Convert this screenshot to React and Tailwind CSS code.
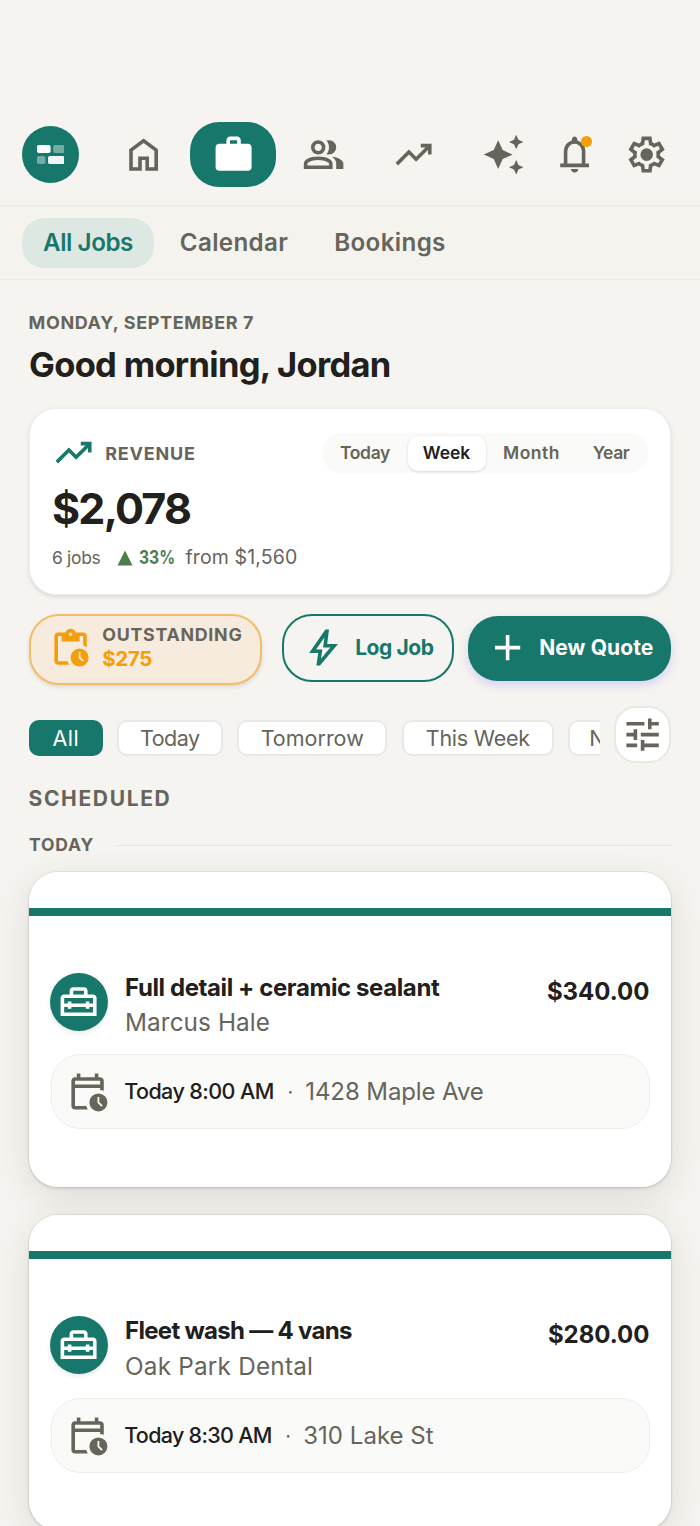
import React, { useState } from 'react';
import clsx from 'clsx';

const ICONS = {
  home: 'M240-200h120v-240h240v240h120v-360L480-740 240-560v360Zm-80 80v-480l320-240 320 240v480H520v-240h-80v240H160Z',
  work: 'M160-120q-33 0-56.5-23.5T80-200v-440q0-33 23.5-56.5T160-720h160v-80q0-33 23.5-56.5T400-880h160q33 0 56.5 23.5T640-800v80h160q33 0 56.5 23.5T880-640v440q0 33-23.5 56.5T800-120H160Zm240-600h160v-80H400v80Z',
  group: 'M40-160v-112q0-34 17.5-62.5T104-378q62-31 126-46.5T360-440q66 0 130 15.5T616-378q29 15 46.5 43.5T680-272v112H40Zm720 0v-120q0-44-24.5-84.5T666-434q51 6 96 20.5t84 35.5q36 20 55 44.5t19 53.5v120H760ZM360-480q-66 0-113-47t-47-113q0-66 47-113t113-47q66 0 113 47t47 113q0 66-47 113t-113 47Zm400-160q0 66-47 113t-113 47q-11 0-28-2.5t-28-5.5q27-32 41.5-71t14.5-81q0-42-14.5-81T544-792q14-5 28-6.5t28-1.5q66 0 113 47t47 113ZM120-240h480v-32q0-11-5.5-20T580-306q-54-27-109-40.5T360-360q-56 0-111 13.5T140-306q-9 5-14.5 14t-5.5 20v32Zm240-320q33 0 56.5-23.5T440-640q0-33-23.5-56.5T360-720q-33 0-56.5 23.5T280-640q0 33 23.5 56.5T360-560Z',
  trend: 'm136-240-56-56 296-298 160 160 208-206H640v-80h240v240h-80v-104L536-320 376-480 136-240Z',
  sparkle: 'm760-600-50-110-110-50 110-50 50-110 50 110 110 50-110 50-50 110Zm0 560-50-110-110-50 110-50 50-110 50 110 110 50-110 50-50 110ZM360-160 260-380 40-480l220-100 100-220 100 220 220 100-220 100-100 220Z',
  bell: 'M160-200v-80h80v-280q0-83 50-147.5T420-792v-28q0-25 17.5-42.5T480-880q25 0 42.5 17.5T540-820v28q80 20 130 84.5T720-560v280h80v80H160ZM480-80q-33 0-56.5-23.5T400-160h160q0 33-23.5 56.5T480-80ZM320-280h320v-280q0-66-47-113t-113-47q-66 0-113 47t-47 113v280Z',
  gear: 'm370-80-16-128q-13-5-24.5-12T307-235l-119 50L78-375l103-78q-1-7-1-13.5v-27q0-6.5 1-13.5L78-585l110-190 119 50q11-8 23-15t24-12l16-128h220l16 128q13 5 24.5 12t22.5 15l119-50 110 190-103 78q1 7 1 13.5v27q0 6.5-2 13.5l103 78-110 190-118-50q-11 8-23 15t-24 12L590-80H370Zm70-80h79l14-106q31-8 57.5-23.5T639-327l99 41 39-68-86-65q5-14 7-29.5t2-31.5q0-16-2-31.5t-7-29.5l86-65-39-68-99 42q-22-23-48.5-38.5T533-694l-13-106h-79l-14 106q-31 8-57.5 23.5T321-633l-99-41-39 68 86 64q-5 15-7 30t-2 32q0 16 2 31t7 30l-86 65 39 68 99-42q22 23 48.5 38.5T427-266l13 106Zm42-180q58 0 99-41t41-99q0-58-41-99t-99-41q-59 0-99.5 41T342-480q0 58 40.5 99t99.5 41Z',
  pending: 'M680-80q-83 0-141.5-58.5T480-280q0-83 58.5-141.5T680-480q83 0 141.5 58.5T880-280q0 83-58.5 141.5T680-80Zm67-105 28-28-75-75v-112h-40v128l87 87Zm-547 65q-33 0-56.5-23.5T120-200v-560q0-33 23.5-56.5T200-840h167q11-35 43-57.5t70-22.5q40 0 71.5 22.5T594-840h166q33 0 56.5 23.5T840-760v250q-18-13-38-22t-42-16v-212h-80v120H280v-120h-80v560h212q7 22 16 42t22 38H200Zm280-640q17 0 28.5-11.5T520-800q0-17-11.5-28.5T480-840q-17 0-28.5 11.5T440-800q0 17 11.5 28.5T480-760Z',
  bolt: 'm422-232 207-248H469l29-227-185 267h139l-30 208ZM320-80l40-280H160l360-520h80l-40 320h240L400-80h-80Z',
  add: 'M440-440H200v-80h240v-240h80v240h240v80H520v240h-80v-240Z',
  tune: 'M440-120v-240h80v80h320v80H520v80h-80Zm-320-80v-80h240v80H120Zm160-160v-80H120v-80h160v-80h80v240h-80Zm160-80v-80h400v80H440Zm160-160v-240h80v80h160v80H680v80h-80Zm-480-80v-80h400v80H120Z',
  calendar: 'M200-640h560v-80H200v80Zm0 560q-33 0-56.5-23.5T120-160v-560q0-33 23.5-56.5T200-800h40v-80h80v80h320v-80h80v80h40q33 0 56.5 23.5T840-720v227q-19-9-39-15t-41-9v-43H200v400h252q7 22 16.5 42T491-80H200Zm520 40q-83 0-141.5-58.5T520-240q0-83 58.5-141.5T720-440q83 0 141.5 58.5T920-240q0 83-58.5 141.5T720-40Zm67-105 28-28-75-75v-112h-40v128l87 87Z',
  toolbox: 'M80-160v-400q0-33 23.5-56.5T160-640h120v-80q0-33 23.5-56.5T360-800h240q33 0 56.5 23.5T680-720v80h120q33 0 56.5 23.5T880-560v400H80Zm240-160v-40h320v40h80v-40h80v120H160v-120h80v40h80ZM160-440v-120h640v120h-80v-40h-80v40H320v-40h-80v40h-80Zm200-200h240v-80H360v80Z',
};

function Icon({ name, className }) {
  return (
    <svg viewBox="0 -960 960 960" fill="currentColor" fillRule="evenodd" className={clsx('size-[43.2px] shrink-0', className)}>
      <path d={ICONS[name]} />
    </svg>
  );
}

const NAV = ['home', 'work', 'group', 'trend'];

const TABS = [
  { label: 'All Jobs', className: 'w-[132px] tracking-[-0.46px]' },
  { label: 'Calendar', className: 'w-[160px] tracking-[0.34px]' },
  { label: 'Bookings', className: 'w-[152px] tracking-[0.35px]' },
];

const PERIODS = [
  { label: 'Today', className: 'w-[82px] tracking-[-0.38px]' },
  { label: 'Week', className: 'w-[78px] tracking-[-0.06px]' },
  { label: 'Month', className: 'w-[89px] tracking-[0.5px]' },
  { label: 'Year', className: 'w-[70px] tracking-[-0.44px]' },
];

const FILTERS = [
  { label: 'All', className: 'w-[73.5px] tracking-[0.48px]' },
  { label: 'Today', className: 'w-[105.5px] tracking-[-0.5px]' },
  { label: 'Tomorrow', className: 'w-[150px]' },
  { label: 'This Week', className: 'w-[152px] tracking-[-0.23px]' },
  { label: 'Next Week', className: 'w-[152px]' },
];

const JOBS = [
  {
    title: 'Full detail + ceramic sealant',
    titleClass: 'tracking-[-0.4px]',
    client: 'Marcus Hale',
    clientClass: 'tracking-[0.1px]',
    price: '$340.00',
    time: 'Today 8:00 AM',
    timeClass: 'tracking-[-0.57px]',
    address: '1428 Maple Ave',
    addressClass: 'tracking-[-0.1px]',
  },
  {
    title: 'Fleet wash — 4 vans',
    titleClass: 'tracking-[-0.7px]',
    client: 'Oak Park Dental',
    clientClass: 'tracking-[0.22px] pt-px',
    price: '$280.00',
    time: 'Today 8:30 AM',
    timeClass: 'tracking-[-0.7px]',
    address: '310 Lake St',
    addressClass: 'tracking-[0.03px]',
  },
];

function Logo() {
  return (
    <div className="flex size-[57px] shrink-0 items-center justify-center rounded-full bg-[#17776a]">
      <svg viewBox="0 0 27.4 19" className="h-[19px] w-[27.4px]" fill="#fff">
        <rect x="0" y="0" width="13.6" height="8" rx="1.8" />
        <rect x="16.2" y="0" width="11.2" height="8" rx="1.8" opacity="0.4" />
        <rect x="0" y="11" width="8.4" height="8" rx="1.8" opacity="0.4" />
        <rect x="11" y="11" width="16.4" height="8" rx="1.8" opacity="0.93" />
      </svg>
    </div>
  );
}

function Header() {
  return (
    <header className="flex h-[206px] items-start border-b border-[#eeece8] pt-[122px] pl-[21.8px]">
      <div className="flex h-[65px] items-center">
        <Logo />
        <nav className="ml-[21.5px] flex gap-1">
          {NAV.map(n => (
            <button
              key={n}
              className={clsx(
                'flex h-[65px] w-[86px] items-center justify-center rounded-[29px]',
                n === 'work' ? 'bg-[#17776a] text-white' : 'text-[#66645b]',
              )}
            >
              <Icon name={n} />
            </button>
          ))}
        </nav>
        <div className="ml-[18.2px] flex gap-3.5 text-[#66645b]">
          <button className="flex w-[57.5px] justify-center"><Icon name="sparkle" /></button>
          <button className="relative flex w-[57.5px] justify-center">
            <Icon name="bell" />
            <span className="absolute top-[3.5px] right-[11px] size-[11px] rounded-full bg-[#f59e0b]" />
          </button>
          <button className="flex w-[57.5px] justify-center"><Icon name="gear" /></button>
        </div>
      </div>
    </header>
  );
}

function Tabs() {
  return (
    <div className="flex h-[74px] items-center border-b border-[#eeece8] bg-[#f4f3ee] pl-[22px] text-[24.2px] font-semibold">
      {TABS.map((t, i) => (
        <button
          key={t.label}
          className={clsx(
            'h-[50px] rounded-[22px] pt-[2px] whitespace-nowrap',
            i === 0 ? 'bg-[#dee8e2] text-[#17776a]' : 'text-[#66645b]',
            t.className,
          )}
        >
          {t.label}
        </button>
      ))}
    </div>
  );
}

function Revenue() {
  const [period, setPeriod] = useState('Week');
  return (
    <section className="mt-[21px] h-[187px] rounded-[27px] border border-[#efeeea] bg-white px-[22px] pt-[24px] shadow-[0_2px_4px_rgba(60,55,45,0.14)]">
      <div className="flex h-10 items-center">
        <Icon name="trend" className="text-[#17776a]" />
        <span className="ml-[10px] text-[18px] font-bold tracking-[0.8px] text-[#66645b]">REVENUE</span>
        <div className="ml-auto flex h-10 w-[326px] items-center rounded-[20px] bg-[#fafaf8] pl-[2px] text-[17.5px] font-semibold">
          {PERIODS.map(p => (
            <button
              key={p.label}
              onClick={() => setPeriod(p.label)}
              className={clsx(
                'h-[35px] rounded-[10px]',
                p.label === period ? 'mx-[1.5px] bg-white text-[#21201d] shadow-[0_1px_3px_rgba(0,0,0,0.14)]' : 'text-[#66645b]',
                p.className,
              )}
            >
              {p.label}
            </button>
          ))}
        </div>
      </div>
      <div className="mt-[8px] h-[54px] text-[43px] leading-[54px] font-bold tracking-[-1.8px] text-[#21201d]">$2,078</div>
      <div className="mt-[11px] flex h-6 items-center whitespace-nowrap text-[#66645b]">
        <span className="text-[17.5px] tracking-[-0.34px]">6 jobs</span>
        <svg viewBox="0 0 16 16" className="ml-[17px] size-4" fill="#4e7d4d">
          <path d="M8 0.5 15.5 15.5H0.5Z" />
        </svg>
        <span className="-mr-[7px] ml-[6px] origin-left scale-x-[0.86] text-[18.2px] font-bold text-[#4e7d4d]">33%</span>
        <span className="ml-[11px] text-[19.5px] tracking-[0.15px]">from $1,560</span>
      </div>
    </section>
  );
}

function Actions() {
  return (
    <div className="mt-[19px] flex h-[71px] items-start">
      <button className="flex h-[70.5px] w-[233px] items-center rounded-[30px] border-2 border-[#f2bd6a] bg-[#f6ebdc] pl-[18px] text-left shadow-[0_2px_4px_rgba(60,55,45,0.14)]">
        <Icon name="pending" className="-mt-px text-[#f59e0b]" />
        <span className="-mt-[4px] ml-[10px] flex flex-col">
          <span className="text-[17.8px] leading-6 font-bold tracking-[0.75px] text-[#66645b]">OUTSTANDING</span>
          <span className="text-[20.5px] leading-6 font-bold tracking-[-0.35px] text-[#f59e0b]">$275</span>
        </span>
      </button>
      <button className="ml-[20px] flex h-[68px] w-[172px] items-center rounded-[30px] border-2 border-[#17776a] pl-[18px] text-[21px] font-bold tracking-[-0.44px] text-[#17776a]">
        <Icon name="bolt" />
        <span className="ml-[10px]">Log Job</span>
      </button>
      <button className="mt-[1.5px] ml-[14px] flex h-[65px] w-[203px] items-center rounded-[30px] bg-[#17776a] pl-[17.5px] text-[21px] font-bold tracking-[0.1px] text-white shadow-[0_4px_10px_rgba(99,91,255,0.22)]">
        <Icon name="add" />
        <span className="ml-[10.5px] whitespace-nowrap">New Quote</span>
      </button>
    </div>
  );
}

function Filters() {
  const [filter, setFilter] = useState('All');
  return (
    <div className="mt-[21px] flex h-[57px] items-center">
      <div className="mt-[6px] flex w-[571px] gap-[14.6px] overflow-hidden text-[21.5px]">
        {FILTERS.map(f => (
          <button
            key={f.label}
            onClick={() => setFilter(f.label)}
            className={clsx(
              'h-9 shrink-0 rounded-[10px] border-2 leading-8 whitespace-nowrap',
              f.label === filter ? 'border-[#17776a] bg-[#17776a] text-white' : 'border-[#e9e8e4] bg-white text-[#66645b]',
              f.className,
            )}
          >
            {f.label}
          </button>
        ))}
      </div>
      <button className="ml-[14px] flex size-[57px] items-center justify-center rounded-[22px] border-2 border-[#e9e8e4] bg-white text-[#66645b]">
        <Icon name="tune" />
      </button>
    </div>
  );
}

function JobCard({ job }) {
  return (
    <article className="h-[315px] overflow-hidden rounded-[29px] bg-white">
      <div className="mt-9 h-[7.5px] bg-[#17776a]" />
      <div className="flex px-[21.5px] pt-[57.5px]">
        <div className="-ml-[0.5px] flex size-[57.5px] shrink-0 items-center justify-center rounded-full bg-[#17776a] text-white shadow-[0_2px_4px_rgba(60,55,45,0.12)]">
          <Icon name="toolbox" />
        </div>
        <div className="ml-[17.5px] whitespace-nowrap">
          <div className={clsx('text-[24px] leading-[30px] font-bold text-[#21201d]', job.titleClass)}>{job.title}</div>
          <div className={clsx('mt-[2px] text-[24.3px] leading-[34px] text-[#66645b]', job.clientClass)}>{job.client}</div>
        </div>
        <div className="mt-[4px] ml-auto text-[24px] leading-[30px] font-bold text-[#21201d]">{job.price}</div>
      </div>
      <div className="mx-[21.5px] mt-[15px] flex h-[75px] items-center rounded-[29px] border-[1.5px] border-[#eeedea] bg-[#fafaf8] pl-[14.5px] whitespace-nowrap">
        <Icon name="calendar" className="text-[#66645b]" />
        <span className={clsx('ml-[15px] text-[21.5px] font-medium text-[#21201d]', job.timeClass)}>{job.time}</span>
        <span className="ml-[13.5px] w-[6px] text-center text-[20px] text-[#66645b]">·</span>
        <span className={clsx('ml-[12px] text-[24px] text-[#66645b]', job.addressClass)}>{job.address}</span>
      </div>
    </article>
  );
}

export default function App() {
  return (
    <div className="h-[1526px] w-[700px] overflow-hidden bg-[#f5f4f0] font-['Inter',sans-serif]">
      <Header />
      <Tabs />
      <main className="px-[29px] pt-[30.5px]">
        <div className="-ml-[0.5px] text-[18px] leading-6 font-bold tracking-[0.62px] text-[#66645b]">MONDAY, SEPTEMBER 7</div>
        <h1 className="mt-[8.5px] text-[34.5px] leading-[44px] font-bold tracking-[-0.7px] text-[#21201d]">Good morning, Jordan</h1>
        <Revenue />
        <Actions />
        <Filters />
        <h2 className="mt-[21px] -ml-[0.5px] text-[21px] leading-[30px] font-bold tracking-[1.65px] text-[#66645b]">SCHEDULED</h2>
        <div className="mt-[19px] flex h-6 items-center">
          <span className="text-[17.5px] font-bold tracking-[0.8px] text-[#66645b]">TODAY</span>
          <span className="ml-[22px] h-px flex-1 bg-[#e8e6e2]" />
        </div>
        <div className="mt-[15px] flex flex-col gap-[28px]">
          {JOBS.map(j => (
            <div key={j.title} className="rounded-[29px] shadow-[0_0_0_1px_rgba(60,55,45,0.08),0_2px_3px_rgba(60,55,45,0.12),0_10px_36px_rgba(60,55,45,0.12)]">
              <JobCard job={j} />
            </div>
          ))}
        </div>
      </main>
    </div>
  );
}
